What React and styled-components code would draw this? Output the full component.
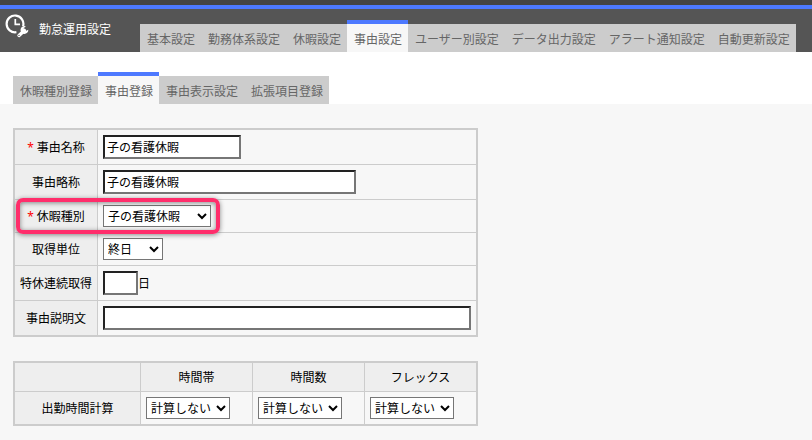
import React from 'react';
import styled, { createGlobalStyle, css } from 'styled-components';

const GlobalStyle = createGlobalStyle`
  *, *::before, *::after { box-sizing: border-box; }
  body {
    margin: 0;
    background: #f7f7f7;
    color: #000;
  }
  body, input, select, table {
    font-family: "Noto Sans CJK JP", sans-serif;
    font-size: 12px;
    line-height: 18px;
  }
`;

const TopBar = styled.div`
  height: 9px;
  background: #444;
  border-bottom: 4px solid #4d79ff;
`;

const Header = styled.header`
  display: flex;
  align-items: flex-end;
  height: 43px;
  background: #555;
`;

const Brand = styled.div`
  display: flex;
  flex: none;
  align-self: flex-start;
  gap: 10px;
  width: 140px;
  padding: 5px 0 0 5px;
`;

const BrandIcon = styled.svg`
  width: 24px;
  height: 24px;
`;

const Title = styled.h1`
  margin: 0;
  padding-top: 6px;
  color: #fff;
  font-size: 12px;
  font-weight: 400;
  line-height: 18px;
`;

const TabList = styled.nav`
  display: flex;
  align-items: flex-end;
`;

const Tab = styled.a`
  height: 28px;
  padding: 6px 6px 0 7px;
  background: #ccc;
  color: #666;
  text-decoration: none;
  white-space: nowrap;

  ${({ $active }) => $active && css`
    height: 32px;
    border-top: 4px solid #4d79ff;
    background: #f7f7f7;
  `}
`;

const SubHeader = styled.div`
  display: flex;
  align-items: flex-end;
  height: 52px;
  padding-left: 13px;
  background: #fff;
`;

const Content = styled.main`
  display: flex;
  flex-direction: column;
  align-items: flex-start;
  gap: 24px;
  padding: 24px 13px 14px;
`;

const Table = styled.table`
  border: 2px solid #ccc;
  border-spacing: 0;

  th, td {
    border: 0 solid #ccc;
    border-width: 0 1px 1px 0;
  }
  th:last-child, td:last-child { border-right-width: 0; }
  tbody tr:last-child > th, tbody tr:last-child > td { border-bottom-width: 0; }
`;

const HeadCell = styled.th`
  position: relative;
  padding: 5px;
  background: #eee;
  font-weight: 400;
  text-align: center;
  white-space: nowrap;
`;

const LabelCell = styled(HeadCell)`
  width: 83px;
`;

const ColumnHead = styled(HeadCell)`
  width: ${({ $wide }) => ($wide ? 126 : 112)}px;
  height: 29px;

  &:last-child { width: 111px; }
`;

const Cell = styled.td`
  padding: 5px;
`;

const FieldLine = styled.div`
  display: flex;
  align-items: center;
`;

const Required = styled.span`
  margin-right: 3px;
  color: #f00;
  font-family: "Noto Sans", sans-serif;
  line-height: 1;
`;

const TextBox = styled.input`
  width: ${({ $width }) => $width}px;
  height: 24px;
  padding: 0 2px 2px;
  border: 2px solid;
  border-color: #222 #767676 #767676 #222;
  border-radius: 0;
  background: #fff;
  color: #000;
`;

const Dropdown = styled.select`
  display: block;
  width: ${({ $width }) => $width}px;
  height: 22px;
  padding: 0 0 2px;
  border: 1px solid #767676;
  border-radius: 0;
  background-color: #fff;
  color: #000;
`;

const Highlight = styled.span`
  position: absolute;
  z-index: 1;
  top: -2px;
  left: 1px;
  width: 204px;
  height: 36px;
  border: 4px solid #ff2d6b;
  border-radius: 7px;
  box-shadow: 0 1px 5px rgba(0, 0, 0, 0.45), inset 0 1px 5px rgba(0, 0, 0, 0.45);
  pointer-events: none;
`;

const MAIN_TABS = [
  '基本設定', '勤務体系設定', '休暇設定', '事由設定',
  'ユーザー別設定', 'データ出力設定', 'アラート通知設定', '自動更新設定',
];
const SUB_TABS = ['休暇種別登録', '事由登録', '事由表示設定', '拡張項目登録'];
const CALC_COLUMNS = ['時間帯', '時間数', 'フレックス'];

function Tabs({ items, current, label }) {
  return (
    <TabList aria-label={label}>
      {items.map((item) => (
        <Tab
          key={item}
          href="#"
          $active={item === current}
          aria-current={item === current ? 'page' : undefined}
        >
          {item}
        </Tab>
      ))}
    </TabList>
  );
}

function Field({ id, label, required, highlighted, children }) {
  return (
    <tr>
      <LabelCell scope="row">
        {required && <Required>*</Required>}
        <label htmlFor={id}>{label}</label>
        {highlighted && <Highlight />}
      </LabelCell>
      <Cell>
        <FieldLine>{children}</FieldLine>
      </Cell>
    </tr>
  );
}

function ClockWrenchIcon() {
  return (
    <BrandIcon viewBox="0 0 24 24" fill="none" aria-hidden="true">
      <path
        d="M18.1 12.2A8.4 8.4 0 1 0 11.4 18.2"
        stroke="#fff"
        strokeWidth="2.2"
      />
      <path d="M10.3 5v5.4h4.7" stroke="#fff" strokeWidth="1.7" />
      <path d="M14 21.4l5.4-5" stroke="#fff" strokeWidth="3.4" strokeLinecap="round" />
      <path
        d="M20.9 12.4a3.9 3.9 0 1 0 2.4 3.3l-2.6 1.2-1.7-.9-.2-1.9z"
        fill="#fff"
      />
      <circle cx="14" cy="21.4" r="0.7" fill="#555" />
    </BrandIcon>
  );
}

export default function App() {
  return (
    <>
      <GlobalStyle />
      <TopBar />
      <Header>
        <Brand>
          <ClockWrenchIcon />
          <Title>勤怠運用設定</Title>
        </Brand>
        <Tabs items={MAIN_TABS} current="事由設定" label="設定" />
      </Header>
      <SubHeader>
        <Tabs items={SUB_TABS} current="事由登録" label="事由設定" />
      </SubHeader>
      <Content>
        <Table>
          <tbody>
            <Field id="name" label="事由名称" required>
              <TextBox id="name" type="text" $width={138} defaultValue="子の看護休暇" />
            </Field>
            <Field id="short" label="事由略称">
              <TextBox id="short" type="text" $width={253} defaultValue="子の看護休暇" />
            </Field>
            <Field id="kind" label="休暇種別" required highlighted>
              <Dropdown id="kind" $width={108}>
                <option>子の看護休暇</option>
              </Dropdown>
            </Field>
            <Field id="unit" label="取得単位">
              <Dropdown id="unit" $width={60}>
                <option>終日</option>
              </Dropdown>
            </Field>
            <Field id="days" label="特休連続取得">
              <TextBox id="days" type="text" $width={35} />
              日
            </Field>
            <Field id="note" label="事由説明文">
              <TextBox id="note" type="text" $width={368} />
            </Field>
          </tbody>
        </Table>
        <Table>
          <thead>
            <tr>
              <ColumnHead $wide />
              {CALC_COLUMNS.map((name) => (
                <ColumnHead key={name} scope="col">{name}</ColumnHead>
              ))}
            </tr>
          </thead>
          <tbody>
            <tr>
              <HeadCell scope="row">出勤時間計算</HeadCell>
              {CALC_COLUMNS.map((name) => (
                <Cell key={name}>
                  <Dropdown $width={84} aria-label={`出勤時間計算 ${name}`}>
                    <option>計算しない</option>
                  </Dropdown>
                </Cell>
              ))}
            </tr>
          </tbody>
        </Table>
      </Content>
    </>
  );
}
